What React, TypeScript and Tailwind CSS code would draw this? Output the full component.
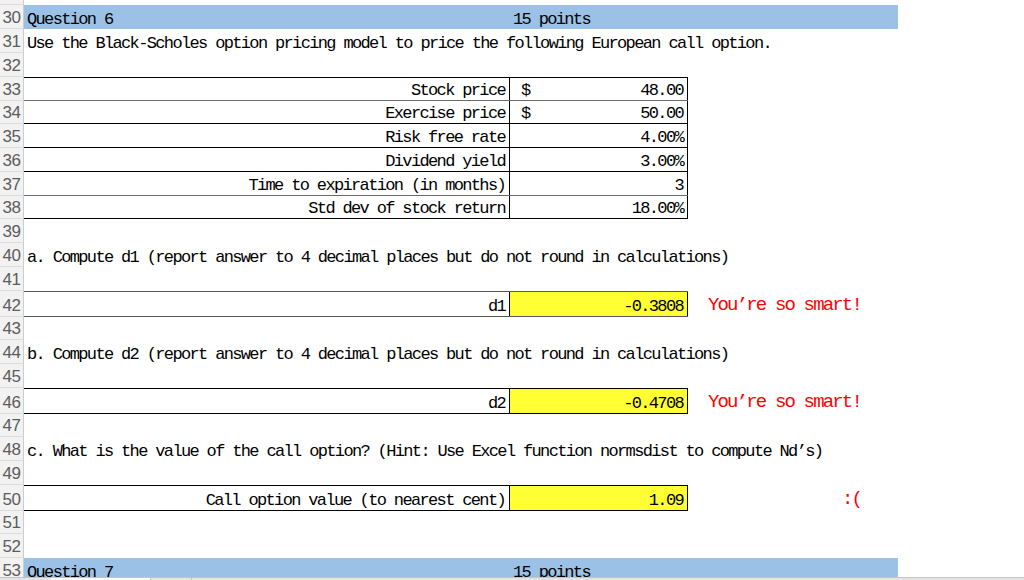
import React from "react";

const T = "[font-family:'Liberation_Mono','Courier_New',monospace] text-[17px] tracking-[-1.65px] leading-[19px] text-black whitespace-pre";
const RED = "[font-family:'Liberation_Mono','Courier_New',monospace] text-[19px] tracking-[-1.84px] leading-[21px] text-[#ff0000] whitespace-pre";

function Row({ n, h, children, extra = "" }: { n: number; h: string; children?: React.ReactNode; extra?: string }) {
  return (
    <div className={`flex shrink-0 ${h} ${extra}`}>
      <div className="w-[24px] shrink-0 bg-[#f2f2f2] border-r border-r-[#cdcdcd] border-b border-b-[#dcdcdc] flex items-end justify-center overflow-hidden [font-family:'Liberation_Sans',Arial,sans-serif] text-[17px] leading-[20px] text-[#5c5c5c] tracking-[-0.5px]">
        {n}
      </div>
      <div className="flex-1 flex min-w-0">{children}</div>
    </div>
  );
}

function Band({ q }: { q: string }) {
  return (
    <div className="w-[874px] bg-[#9bc2e6] flex items-end">
      <div className={`w-[489px] pl-[3px] ${T}`}>{q}</div>
      <div className={T}>15 points</div>
    </div>
  );
}

function Line({ text }: { text: string }) {
  return <div className={`flex items-end pl-[3px] ${T}`}>{text}</div>;
}

function TableRow({
  label,
  value,
  dollar,
  top,
  bottomColor = "border-b-black",
}: {
  label: string;
  value: string;
  dollar?: boolean;
  top?: boolean;
  bottomColor?: string;
}) {
  return (
    <div className={`flex w-[664px] border-b ${bottomColor} ${top ? "border-t border-t-black" : ""}`}>
      <div className={`w-[486px] shrink-0 border-r border-r-black flex items-end justify-end pr-[4px] ${T}`}>{label}</div>
      <div className={`w-[178px] shrink-0 border-r border-r-black flex items-end justify-between pl-[11px] pr-[4px] ${T}`}>
        <span>{dollar ? "$" : ""}</span>
        <span>{value}</span>
      </div>
    </div>
  );
}

function AnswerRow({ label, value, msg, lineColor = "border-black" }: { label: string; value: string; msg: string; lineColor?: string }) {
  return (
    <div className="flex">
      <div className={`flex w-[664px] border-t border-b ${lineColor}`}>
        <div className={`w-[486px] shrink-0 border-r border-r-black flex items-end justify-end pr-[4px] ${T}`}>{label}</div>
        <div className={`w-[178px] shrink-0 border-r border-r-black bg-[#ffff33] flex items-end justify-end pr-[4px] ${T}`}>{value}</div>
      </div>
      <div className={`w-[174px] shrink-0 flex items-end justify-end pb-[1px] pr-[1px] ${RED}`}>{msg}</div>
    </div>
  );
}

export default function App() {
  return (
    <div className="w-[1024px] h-[580px] bg-white flex flex-col overflow-hidden">
      <div className="flex-1 flex flex-col overflow-hidden">
        <Row n={29} h="h-[24px]" extra="-mt-[19px]" />
        <Row n={30} h="h-[24px]">
          <Band q="Question 6" />
        </Row>
        <Row n={31} h="h-[24px]">
          <Line text="Use the Black-Scholes option pricing model to price the following European call option." />
        </Row>
        <Row n={32} h="h-[24px]" />
        <Row n={33} h="h-[24px]">
          <TableRow label="Stock price" value="48.00" dollar top bottomColor="border-b-[#6a6a6a]" />
        </Row>
        <Row n={34} h="h-[23px]">
          <TableRow label="Exercise price" value="50.00" dollar />
        </Row>
        <Row n={35} h="h-[24px]">
          <TableRow label="Risk free rate" value="4.00%" />
        </Row>
        <Row n={36} h="h-[24px]">
          <TableRow label="Dividend yield" value="3.00%" />
        </Row>
        <Row n={37} h="h-[24px]">
          <TableRow label="Time to expiration (in months)" value="3" bottomColor="border-b-[#6a6a6a]" />
        </Row>
        <Row n={38} h="h-[23px]">
          <TableRow label="Std dev of stock return" value="18.00%" />
        </Row>
        <Row n={39} h="h-[24px]" />
        <Row n={40} h="h-[24px]">
          <Line text="a. Compute d1 (report answer to 4 decimal places but do not round in calculations)" />
        </Row>
        <Row n={41} h="h-[24px]" />
        <Row n={42} h="h-[26px]">
          <AnswerRow label="d1" value="-0.3808" msg="You’re so smart!" lineColor="border-[#5a5a5a]" />
        </Row>
        <Row n={43} h="h-[23px]" />
        <Row n={44} h="h-[24px]">
          <Line text="b. Compute d2 (report answer to 4 decimal places but do not round in calculations)" />
        </Row>
        <Row n={45} h="h-[24px]" />
        <Row n={46} h="h-[26px]">
          <AnswerRow label="d2" value="-0.4708" msg="You’re so smart!" />
        </Row>
        <Row n={47} h="h-[23px]" />
        <Row n={48} h="h-[24px]">
          <Line text="c. What is the value of the call option? (Hint: Use Excel function normsdist to compute Nd’s)" />
        </Row>
        <Row n={49} h="h-[24px]" />
        <Row n={50} h="h-[26px]">
          <AnswerRow label="Call option value (to nearest cent)" value="1.09" msg=":(" />
        </Row>
        <Row n={51} h="h-[23px]" />
        <Row n={52} h="h-[24px]" />
        <Row n={53} h="h-[24px]">
          <Band q="Question 7" />
        </Row>
      </div>
      <div className="h-[3px] shrink-0 bg-[#e4e4e4] border-t border-t-[#c4c4c4] flex">
        <div className="ml-[51px] w-[100px] bg-white border-r border-r-[#c4c4c4]" />
        <div className="w-[41px] border-r border-r-[#c4c4c4]" />
      </div>
    </div>
  );
}
